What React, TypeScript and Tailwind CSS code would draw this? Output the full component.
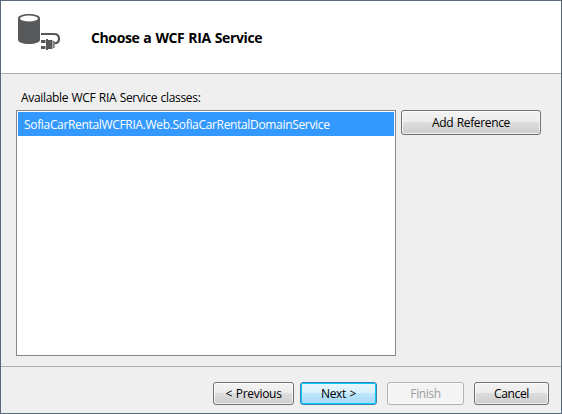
import { clsx } from "clsx";

type ButtonKind = "normal" | "primary" | "disabled";

const kinds: Record<ButtonKind, string> = {
  normal:
    "border-[#707070] bg-[linear-gradient(#f3f3f3_0%,#ebebeb_50%,#dddddd_50%,#cdcdcd_100%)] shadow-[inset_0_0_0_1px_rgba(255,255,255,0.7)] text-black",
  primary:
    "border-[#3c7fb1] bg-[linear-gradient(#eaf6fd_0%,#d9f0fc_50%,#bee6fd_50%,#a7d9f5_100%)] shadow-[inset_0_0_0_1px_#00ccff] text-black",
  disabled: "border-[#adb2b5] bg-[#f4f4f4] shadow-[inset_0_0_0_1px_#fafafa] text-[#a0a0a0]",
};

function Button({
  label,
  kind = "normal",
  className,
  textClass,
}: {
  label: string;
  kind?: ButtonKind;
  className: string;
  textClass: string;
}) {
  return (
    <button
      disabled={kind === "disabled"}
      className={clsx(
        "flex shrink-0 items-center justify-center rounded-[3px] border whitespace-nowrap",
        kinds[kind],
        className,
      )}
    >
      <span className={textClass}>{label}</span>
    </button>
  );
}

function DatabasePlugIcon() {
  return (
    <svg width="44" height="38" viewBox="0 0 44 38" className="shrink-0">
      <path
        d="M0 4.2C0 1.700 4.700 0 11 0s11 1.700 11 4.200v21.600c0 2.500-4.700 4.200-11 4.200S0 28.300 0 25.800Z"
        fill="#58595b"
      />
      <ellipse cx="11" cy="4.500" rx="9" ry="3" fill="#fff" />
      <path d="M23 20h13c3.300 0 5 2 5 4.800 0 2.700-1.500 4.500-4.500 4.500" fill="none" stroke="#58595b" strokeWidth="2.200" />
      <path d="M23 26h4.500v3h-4.500zM23 32h4.500v3h-4.500zM28 25h2v11h-2zM30 26h4.500v9h-4.500zM35.200 27h1.300v7h-1.300z" fill="#58595b" />
    </svg>
  );
}

export default function App() {
  return (
    <div className="flex h-[414px] w-[562px] flex-col overflow-hidden border border-[#5b677b] bg-[#efefef] font-['Open_Sans','Noto_Sans',sans-serif] text-[12px] leading-4 text-black">
      <header className="flex h-[73px] shrink-0 items-start border-b border-[#aeaeae] bg-white pt-[13px] pl-[17px]">
        <DatabasePlugIcon />
        <h1 className="mt-4 ml-[29px] text-[14px] leading-4 font-bold tracking-[-0.38px] [word-spacing:0.7px] whitespace-nowrap">
          Choose a WCF RIA Service
        </h1>
      </header>

      <main className="flex h-[292px] shrink-0 flex-col pt-4 pl-[15px]">
        <div className="h-5 pl-[5px] tracking-[-0.32px] [word-spacing:0.6px] whitespace-nowrap">
          Available WCF RIA Service classes:
        </div>
        <div className="flex items-start gap-[5px]">
          <ul className="h-[246px] w-[380px] shrink-0 border border-[#828790] bg-white p-px">
            <li className="flex h-6 items-center bg-[#3399ff] pt-0.5 pl-1.5 tracking-[-0.33px] whitespace-nowrap text-white">
              SofiaCarRentalWCFRIA.Web.SofiaCarRentalDomainService
            </li>
          </ul>
          <Button label="Add Reference" className="h-[25px] w-[140px]" textClass="tracking-[-0.35px] [word-spacing:0.7px]" />
        </div>
      </main>

      <footer className="flex h-12 shrink-0 items-start border-t border-[#aeaeae] pt-[15px] pl-[212px]">
        <Button label="< Previous" className="h-[23px] w-[81px]" textClass="tracking-[-0.3px] [word-spacing:1px]" />
        <Button label="Next >" kind="primary" className="ml-1.5 h-[23px] w-[77px]" textClass="tracking-[-0.4px] [word-spacing:1px]" />
        <Button label="Finish" kind="disabled" className="ml-2.5 h-[23px] w-[77px]" textClass="tracking-[-0.4px]" />
        <Button label="Cancel" className="ml-2.5 h-[23px] w-[75px]" textClass="tracking-[-0.35px]" />
      </footer>
    </div>
  );
}
